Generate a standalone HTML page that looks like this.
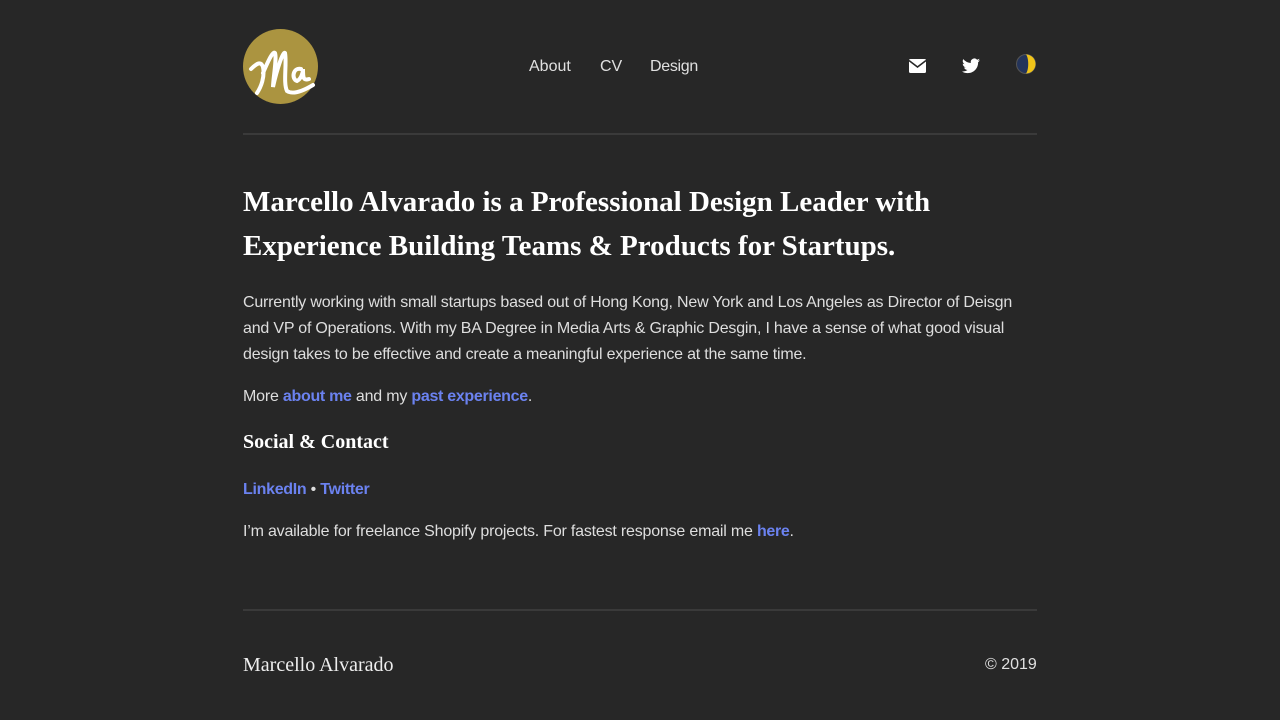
<!DOCTYPE html>
<html><head><meta charset="utf-8"><style>
body{margin:0;background:#272727;color:#eee;font-family:"Liberation Sans",sans-serif;width:1280px;height:720px;overflow:hidden;position:relative}
.abs{position:absolute}
.serif{font-family:"Liberation Serif",serif;font-weight:bold;color:#fff}
p{margin:0;font-size:16px;line-height:26px;color:#dedede;letter-spacing:-0.2px}
a{color:#6b82f0;font-weight:bold;text-decoration:none;letter-spacing:-0.3px}
.nav{font-size:16px;color:#e0e0e0}
hr{position:absolute;left:243px;width:794px;border:0;border-top:2px solid #3a3a3a;margin:0}
</style></head><body>
<svg class="abs" style="left:243px;top:29px" width="75" height="75" viewBox="0 0 75 75">
<circle cx="37.5" cy="37.5" r="37.5" fill="#ab9440"/>
<path d="M8 40 C14 34 18 32 20 38 C22 48 18 58 14 64 M20 44 C26 30 30 22 32 24 C34 30 30 50 30 58 C34 40 40 22 42 24 C44 34 40 54 44 62 C50 66 60 62 70 56" stroke="#fff" stroke-width="4" fill="none" stroke-linecap="round"/>
<path d="M58 40 C50 38 48 50 54 52 C58 50 60 44 60 40 C60 48 60 52 66 50" stroke="#fff" stroke-width="4" fill="none" stroke-linecap="round"/>
</svg>
<div class="abs nav" style="left:529px;top:58px">About</div>
<div class="abs nav" style="left:600px;top:58px">CV</div>
<div class="abs nav" style="left:650px;top:58px;letter-spacing:-0.3px">Design</div>
<svg class="abs" style="left:909px;top:59px" width="17" height="14" viewBox="0 0 17 14"><rect width="17" height="14" rx="1.5" fill="#fff"/><path d="M0 1.5 L8.5 8 L17 1.5" stroke="#272727" stroke-width="1.5" fill="none"/></svg>
<svg class="abs" style="left:962px;top:58px" width="18" height="16" viewBox="0 0 24 20"><path d="M24 2.4a9.8 9.8 0 0 1-2.8.8A4.9 4.9 0 0 0 23.3.4a9.9 9.9 0 0 1-3.1 1.2A4.9 4.9 0 0 0 11.8 6 14 14 0 0 1 1.7.9a4.9 4.9 0 0 0 1.5 6.6A4.9 4.9 0 0 1 1 6.9a4.9 4.9 0 0 0 3.9 4.9 4.9 4.9 0 0 1-2.2.1 4.9 4.9 0 0 0 4.6 3.4A9.9 9.9 0 0 1 0 17.3 14 14 0 0 0 7.5 19.5c9.1 0 14-7.5 14-14v-.6A10 10 0 0 0 24 2.4z" fill="#fff"/></svg>
<svg class="abs" style="left:1016px;top:54px" width="20" height="20" viewBox="0 0 20 20"><circle cx="10" cy="10" r="9.5" fill="#24345a" stroke="#555" stroke-width="1"/><path d="M10 .5 A9.5 9.5 0 0 1 10 19.5 C13 16 13 4 10 .5z" fill="#f0c419"/></svg>
<hr style="top:133px">
<div class="abs serif" style="left:243px;top:180px;width:800px;font-size:29px;line-height:44px">Marcello Alvarado is a Professional Design Leader with Experience Building Teams &amp; Products for Startups.</div>
<p class="abs" style="left:243px;top:290px;width:785px">Currently working with small startups based out of Hong Kong, New York and Los Angeles as Director of Deisgn and VP of Operations. With my BA Degree in Media Arts &amp; Graphic Desgin, I have a sense of what good visual design takes to be effective and create a meaningful experience at the same time.</p>
<p class="abs" style="left:243px;top:384px">More <a>about me</a> and my <a>past experience</a>.</p>
<div class="abs serif" style="left:243px;top:431px;font-size:20px">Social &amp; Contact</div>
<p class="abs" style="left:243px;top:477px"><a>LinkedIn</a> • <a>Twitter</a></p>
<p class="abs" style="left:243px;top:519px">I’m available for freelance Shopify projects. For fastest response email me <a>here</a>.</p>
<hr style="top:609px">
<div class="abs" style="left:243px;top:654px;font-family:'Liberation Serif',serif;font-size:20px;color:#eee">Marcello Alvarado</div>
<div class="abs" style="left:985px;top:656px;font-size:16px;color:#e0e0e0">© 2019</div>
</body></html>
